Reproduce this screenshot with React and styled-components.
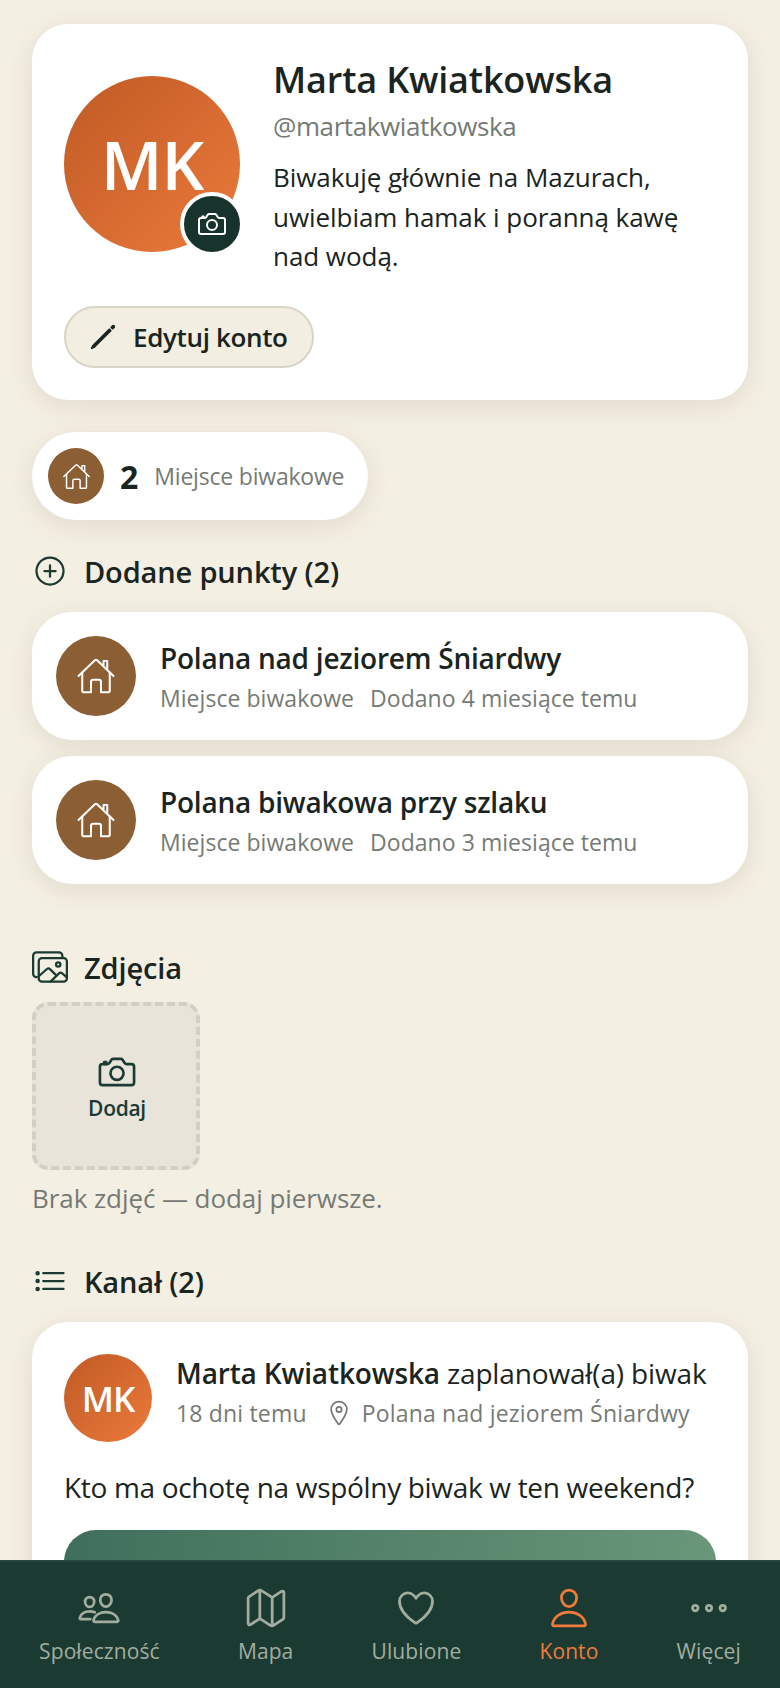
import React from 'react';
import styled, { createGlobalStyle } from 'styled-components';
import {
  IoAddCircleOutline,
  IoCameraOutline,
  IoEllipsisHorizontalOutline,
  IoHeartOutline,
  IoHomeOutline,
  IoImagesOutline,
  IoListOutline,
  IoLocationOutline,
  IoMapOutline,
  IoPencilOutline,
  IoPeopleOutline,
  IoPersonOutline,
} from 'react-icons/io5';

const GlobalStyle = createGlobalStyle`
  * { box-sizing: border-box; }
  html, body { margin: 0; padding: 0; }
  body {
    background: #f4efe3;
    color: #1a2421;
    font-family: "Open Sans", "Noto Sans", sans-serif;
  }
`;

const Shell = styled.div`
  display: flex;
  flex-direction: column;
  height: 1688px;
  overflow: hidden;
`;

const Content = styled.main`
  flex: 1;
  min-height: 0;
  overflow: hidden;
  padding: 24px 32px 0;
`;

const ProfileCard = styled.section`
  background: #fff;
  border-radius: 36px;
  padding: 32px;
  box-shadow: 0 6px 24px rgba(90, 80, 50, 0.12);
`;

const ProfileTop = styled.div`
  display: flex;
  align-items: flex-start;
  gap: 33px;
`;

const Avatar = styled.div`
  position: relative;
  flex: none;
  width: ${(p) => p.$size}px;
  height: ${(p) => p.$size}px;
  margin-top: ${(p) => p.$top || 0}px;
  border-radius: 50%;
  background: linear-gradient(135deg, #bf5a24, #ec7a3c);
  color: #fff;
  display: flex;
  align-items: center;
  justify-content: center;
  font-size: ${(p) => p.$font}px;
  font-weight: 600;
  letter-spacing: -1px;
`;

const CameraBadge = styled.span`
  position: absolute;
  right: -4px;
  bottom: -4px;
  width: 64px;
  height: 64px;
  border-radius: 50%;
  background: #17332b;
  border: 4px solid #fff;
  color: #fff;
  display: flex;
  align-items: center;
  justify-content: center;
  font-size: 32px;
`;

const ProfileText = styled.div`
  display: flex;
  flex-direction: column;
  min-width: 0;
`;

const Name = styled.h1`
  margin: 0;
  font-size: 36px;
  line-height: 48px;
  font-weight: 600;
  letter-spacing: -0.15px;
`;

const Handle = styled.div`
  margin-top: 5px;
  font-size: 26px;
  line-height: 34px;
  color: #767a74;
  letter-spacing: -0.4px;
`;

const Bio = styled.p`
  margin: 15px 0 0;
  font-size: 26px;
  line-height: 39.5px;
  letter-spacing: -0.05px;
`;

const EditButton = styled.button`
  display: inline-flex;
  align-items: center;
  gap: 15px;
  height: 62px;
  margin-top: 29.5px;
  padding: 0 24px 0 22px;
  border: 2px solid #d9d4c4;
  border-radius: 31px;
  background: #f3eee2;
  color: #1a2421;
  font-family: inherit;
  font-size: 26px;
  font-weight: 600;
  letter-spacing: -0.35px;
  svg { font-size: 30px; }
`;

const CountPill = styled.div`
  display: inline-flex;
  align-items: center;
  height: 88px;
  margin-top: 32px;
  padding: 0 24px 0 16px;
  border-radius: 44px;
  background: #fff;
  box-shadow: 0 6px 24px rgba(90, 80, 50, 0.12);
  vertical-align: top;
`;

const IconCircle = styled.span`
  flex: none;
  width: ${(p) => p.$size}px;
  height: ${(p) => p.$size}px;
  border-radius: 50%;
  background: #8b5e34;
  color: #fff;
  display: flex;
  align-items: center;
  justify-content: center;
  font-size: ${(p) => p.$icon}px;
  svg path { stroke-width: 26 !important; }
`;

const CountValue = styled.span`
  margin-left: 16px;
  font-size: 32px;
  font-weight: 700;
`;

const CountLabel = styled.span`
  margin-left: 16px;
  font-size: 23px;
  color: #767a74;
  letter-spacing: -0.2px;
`;

const SectionHead = styled.h2`
  display: flex;
  align-items: center;
  gap: ${(p) => p.$gap || 16}px;
  margin: ${(p) => p.$top}px 0 0;
  height: 44px;
  font-size: 29px;
  font-weight: 600;
  letter-spacing: -0.15px;
  svg { flex: none; color: #1a3a32; font-size: ${(p) => p.$icon || 36}px; }
`;

const PlaceList = styled.div`
  display: flex;
  flex-direction: column;
  gap: 16px;
  margin-top: 19px;
`;

const PlaceRow = styled.article`
  display: flex;
  align-items: center;
  gap: 24px;
  height: 128px;
  padding: 0 24px;
  border-radius: 40px;
  background: #fff;
  box-shadow: 0 6px 24px rgba(90, 80, 50, 0.12);
`;

const PlaceTitle = styled.div`
  font-size: 28px;
  line-height: 38px;
  font-weight: 600;
  letter-spacing: -0.23px;
`;

const PlaceMeta = styled.div`
  display: flex;
  gap: 16px;
  margin-top: 5px;
  font-size: 23px;
  line-height: 32px;
  color: #767a74;
  letter-spacing: 0.05px;
`;

const AddTile = styled.button`
  display: flex;
  flex-direction: column;
  align-items: center;
  justify-content: center;
  gap: 1px;
  width: 168px;
  height: 168px;
  margin-top: 13px;
  padding: 0 0 0 2px;
  border: 4px dashed #d4cfc3;
  border-radius: 16px;
  background: #e8e4da;
  color: #1a3a32;
  font-family: inherit;
  font-size: 21px;
  font-weight: 600;
  letter-spacing: -0.3px;
  svg { font-size: 42px; }
`;

const EmptyNote = styled.p`
  margin: 11px 0 0;
  font-size: 26px;
  line-height: 34px;
  color: #767a74;
  letter-spacing: -0.07px;
`;

const FeedCard = styled.article`
  margin-top: 19px;
  padding: 32px;
  border-radius: 36px;
  background: #fff;
  box-shadow: 0 6px 24px rgba(90, 80, 50, 0.12);
`;

const FeedHead = styled.div`
  display: flex;
  align-items: flex-start;
  gap: 24px;
`;

const FeedTitle = styled.div`
  font-size: 28px;
  line-height: 38px;
  letter-spacing: -0.15px;
  white-space: nowrap;
  strong { font-weight: 600; }
`;

const FeedMeta = styled.div`
  display: flex;
  align-items: center;
  margin-top: 5px;
  font-size: 23px;
  line-height: 32px;
  color: #767a74;
  letter-spacing: 0.18px;
  white-space: nowrap;
  svg { margin: 0 9px 0 18px; font-size: 28px; }
`;

const FeedText = styled.p`
  margin: 25px 0 0;
  font-size: 28px;
  line-height: 40px;
  letter-spacing: -0.32px;
`;

const FeedPhoto = styled.div`
  height: 320px;
  margin-top: 23px;
  border-radius: 32px;
  background: linear-gradient(100deg, #3f6f5b, #6d9a7c);
`;

const BottomNav = styled.nav`
  flex: none;
  display: flex;
  justify-content: space-around;
  height: 128px;
  padding-top: 24px;
  background: #1a3a32;
  border-top: 2px solid #24473e;
`;

const NavItem = styled.div`
  display: flex;
  flex-direction: column;
  align-items: center;
  gap: 6px;
  color: ${(p) => (p.$active ? '#f07a3a' : '#a3ad9f')};
  font-size: 21px;
  line-height: 30px;
  letter-spacing: 0.1px;
  svg { font-size: 44px; }
`;

const navItems = [
  { label: 'Społeczność', Icon: IoPeopleOutline },
  { label: 'Mapa', Icon: IoMapOutline },
  { label: 'Ulubione', Icon: IoHeartOutline },
  { label: 'Konto', Icon: IoPersonOutline, active: true },
  { label: 'Więcej', Icon: IoEllipsisHorizontalOutline },
];

const places = [
  { title: 'Polana nad jeziorem Śniardwy', added: 'Dodano 4 miesiące temu' },
  { title: 'Polana biwakowa przy szlaku', added: 'Dodano 3 miesiące temu' },
];

export default function App() {
  return (
    <Shell>
      <GlobalStyle />
      <Content>
        <ProfileCard>
          <ProfileTop>
            <Avatar $size={176} $font={67} $top={20}>
              MK
              <CameraBadge><IoCameraOutline /></CameraBadge>
            </Avatar>
            <ProfileText>
              <Name>Marta Kwiatkowska</Name>
              <Handle>@martakwiatkowska</Handle>
              <Bio>Biwakuję głównie na Mazurach, uwielbiam hamak i poranną kawę nad wodą.</Bio>
            </ProfileText>
          </ProfileTop>
          <EditButton><IoPencilOutline />Edytuj konto</EditButton>
        </ProfileCard>

        <CountPill>
          <IconCircle $size={56} $icon={29}><IoHomeOutline /></IconCircle>
          <CountValue>2</CountValue>
          <CountLabel>Miejsce biwakowe</CountLabel>
        </CountPill>

        <SectionHead $top={29}><IoAddCircleOutline />Dodane punkty (2)</SectionHead>
        <PlaceList>
          {places.map((place) => (
            <PlaceRow key={place.title}>
              <IconCircle $size={80} $icon={40}><IoHomeOutline /></IconCircle>
              <div>
                <PlaceTitle>{place.title}</PlaceTitle>
                <PlaceMeta>
                  <span>Miejsce biwakowe</span>
                  <span>{place.added}</span>
                </PlaceMeta>
              </div>
            </PlaceRow>
          ))}
        </PlaceList>

        <SectionHead $top={61} $icon={36}><IoImagesOutline />Zdjęcia</SectionHead>
        <AddTile><IoCameraOutline />Dodaj</AddTile>
        <EmptyNote>Brak zdjęć — dodaj pierwsze.</EmptyNote>

        <SectionHead $top={44}><IoListOutline />Kanał (2)</SectionHead>
        <FeedCard>
          <FeedHead>
            <Avatar $size={88} $font={35}>MK</Avatar>
            <div>
              <FeedTitle><strong>Marta Kwiatkowska</strong> zaplanował(a) biwak</FeedTitle>
              <FeedMeta>
                <span>18 dni temu</span>
                <IoLocationOutline />
                <span>Polana nad jeziorem Śniardwy</span>
              </FeedMeta>
            </div>
          </FeedHead>
          <FeedText>Kto ma ochotę na wspólny biwak w ten weekend?</FeedText>
          <FeedPhoto />
        </FeedCard>
      </Content>
      <BottomNav>
        {navItems.map(({ label, Icon, active }) => (
          <NavItem key={label} $active={active}>
            <Icon />
            {label}
          </NavItem>
        ))}
      </BottomNav>
    </Shell>
  );
}
